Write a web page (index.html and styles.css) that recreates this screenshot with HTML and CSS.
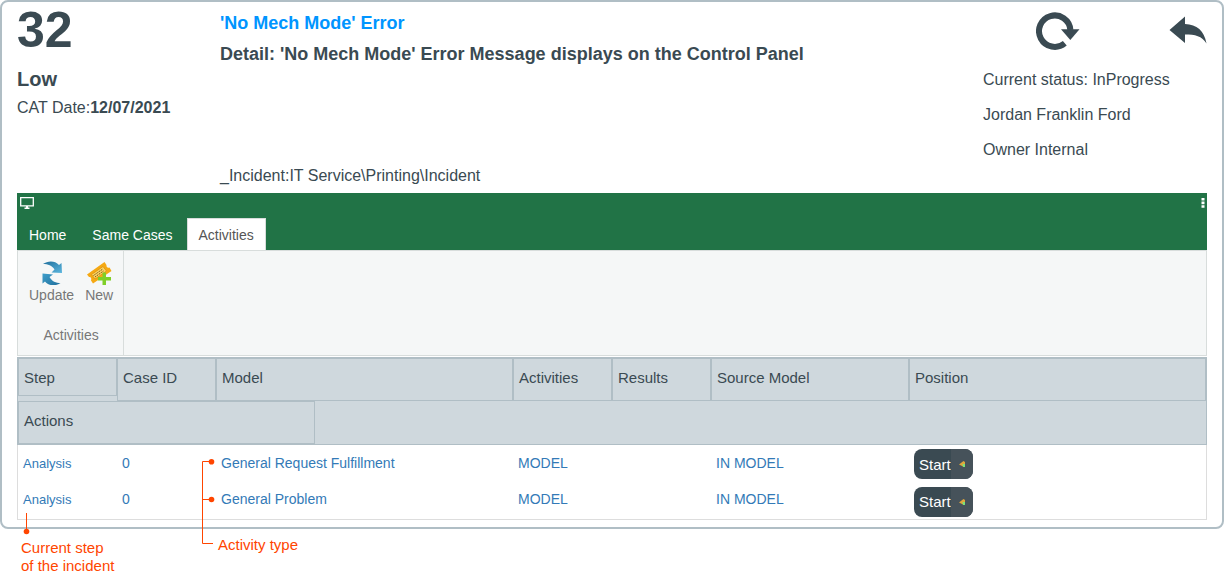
FILE: index.html
```html
<!DOCTYPE html>
<html lang="en">
<head>
  <meta charset="UTF-8" />
  <meta name="viewport" content="width=device-width, initial-scale=1.0"/>
  <title>Incident 32</title>
  <link rel="stylesheet" href="styles.css">
</head>
<body>

<main class="page">
  <div class="card">
    <header class="summary">
      <div class="summary-left">
        <div class="number">32</div>
        <div class="priority">Low</div>
        <div class="date">CAT Date:<b>12/07/2021</b></div>
      </div>

      <div class="summary-main">
        <h1>'No Mech Mode' Error</h1>
        <h2>Detail: 'No Mech Mode' Error Message displays on the Control Panel</h2>
        <p class="path">_Incident:IT Service\Printing\Incident</p>
      </div>

      <div class="summary-right">
        <div class="tools">
          <button type="button" class="icon-btn" aria-label="Refresh">
            <svg width="44" height="38" viewBox="0 0 44 38">
              <path d="M28.800 31.200A15.700 15.700 0 1 1 34.400 18" fill="none" stroke="#3a4a52" stroke-width="6"/>
              <path d="M25 17.300H43.500L34.300 28Z" fill="#3a4a52"/>
            </svg>
          </button>
          <button type="button" class="icon-btn" aria-label="Back">
            <svg width="38" height="28" viewBox="0 0 38 28">
              <path d="M.5 14L16 .5V8C28 9 35 14 37.500 27.500C33 20 26 18.500 16 18.500V27Z" fill="#3a4a52"/>
            </svg>
          </button>
        </div>
        <p>Current status: InProgress</p>
        <p>Jordan Franklin Ford</p>
        <p>Owner Internal</p>
      </div>
    </header>

    <section class="ribbon">
      <div class="ribbon-top">
        <svg width="14" height="12" viewBox="0 0 14 12">
          <path d="M.7.700H13.300V8.800H.7Z" fill="none" stroke="#fff" stroke-width="1.300"/>
          <path d="M6 9H8V10.500H9.500V12H4.500V10.500H6Z" fill="#fff"/>
        </svg>
        <svg width="4" height="11" viewBox="0 0 4 11">
          <path d="M.5 1H3.500V3.600H.5ZM.5 4.600H3.500V7.200H.5ZM.5 8.200H3.500V10.800H.5Z" fill="#fff"/>
        </svg>
      </div>
      <nav class="tabs">
        <a href="#home">Home</a>
        <a href="#same">Same Cases</a>
        <a href="#activities" class="active">Activities</a>
      </nav>
      <div class="ribbon-body">
        <div class="group">
          <div class="group-buttons">
            <button type="button" class="tool">
              <svg width="24" height="24" viewBox="0 0 24 24">
                <defs>
                  <linearGradient id="blue" x1="0" y1="0" x2="1" y2="1">
                    <stop offset="0" stop-color="#1f6f9c"/>
                    <stop offset="1" stop-color="#5cb6de"/>
                  </linearGradient>
                  <linearGradient id="blue-low" x1="0" y1="0" x2="1" y2="1">
                    <stop offset="0" stop-color="#3f9fcb"/>
                    <stop offset="1" stop-color="#1f6f9c"/>
                  </linearGradient>
                </defs>
                <path d="M3 3C8-.5 15-.5 19 4L21.500 2L22 12L11.500 11.500L14.500 8.500C12 4.500 8 3 3 3Z" fill="url(#blue)"/>
                <path d="M20.500 22C15.500 25.500 8.500 25 5 20.500L2.500 22.500V12.500L13 13.500L9.500 16C12 20.500 16 22 20.500 22Z" fill="url(#blue-low)"/>
              </svg>
              Update
            </button>
            <button type="button" class="tool">
              <svg width="26" height="24" viewBox="0 0 26 24">
                <path d="M1 13.500L18.500 1L20.500 4C20 6 22 7.500 23.500 6.500L25.500 10L7 22.500L5 19.500C6 17 4.500 15.500 3 16Z" fill="#f5a914"/>
                <path d="M5.500 13.500L17 5.500L20.500 10L9 18Z" fill="#fbd565" stroke="#dc920e" stroke-width=".8"/>
                <path d="M7.500 14.500L16.500 8.200M9 16L17.500 10" stroke="#7d5212" stroke-width="1" stroke-dasharray="1.500 .8"/>
                <path d="M16.500 11.500H20V16H25V19.500H20V24H16.500V19.500H12V16H16.500Z" fill="#7fcf28"/>
              </svg>
              New
            </button>
          </div>
          <div class="group-name">Activities</div>
        </div>
      </div>
    </section>

    <table class="grid">
      <thead>
        <tr>
          <th class="short"><span>Step</span></th>
          <th>Case ID</th>
          <th colspan="3">Model</th>
          <th>Activities</th>
          <th>Results</th>
          <th colspan="2">Source Model</th>
          <th colspan="3">Position</th>
        </tr>
        <tr>
          <th colspan="3">Actions</th>
          <td colspan="9"></td>
        </tr>
      </thead>
      <tbody>
        <tr>
          <td class="step"><a href="#a1">Analysis</a></td>
          <td><a href="#c1">0</a></td>
          <td colspan="3"><a href="#m1">General Request Fulfillment</a></td>
          <td><a href="#t1">MODEL</a></td>
          <td></td>
          <td colspan="2"><a href="#s1">IN MODEL</a></td>
          <td colspan="3" class="action">
            <button type="button" class="start"><span>Start</span>
              <svg width="22" height="30" viewBox="0 0 22 30">
                <path d="M8 15.500L12.500 12L14 13V17L12 17.500Z" fill="#e0a63a"/>
                <path d="M11.500 15H14V18H12Z" fill="#7be07a"/>
              </svg>
            </button>
          </td>
        </tr>
        <tr>
          <td class="step"><a href="#a2">Analysis</a></td>
          <td><a href="#c2">0</a></td>
          <td colspan="3"><a href="#m2">General Problem</a></td>
          <td><a href="#t2">MODEL</a></td>
          <td></td>
          <td colspan="2"><a href="#s2">IN MODEL</a></td>
          <td colspan="3" class="action">
            <button type="button" class="start"><span>Start</span>
              <svg width="22" height="30" viewBox="0 0 22 30">
                <path d="M8 15.500L12.500 12L14 13V17L12 17.500Z" fill="#e0a63a"/>
                <path d="M11.500 15H14V18H12Z" fill="#7be07a"/>
              </svg>
            </button>
          </td>
        </tr>
      </tbody>
    </table>
  </div>

  <!-- callouts drawn over the table -->
  <svg class="lines" width="220" height="92" viewBox="0 0 220 92">
    <path d="M26.500 54V73M211 2.500H202.500V84.500H213M202.500 40.500H211" fill="none" stroke="#ff4500"/>
    <circle cx="26.500" cy="72.500" r="2.800" fill="#ff4500"/>
    <circle cx="211.500" cy="2.800" r="2.800" fill="#ff4500"/>
    <circle cx="211.500" cy="40.500" r="2.800" fill="#ff4500"/>
  </svg>
  <div class="notes">
    <p class="note-step">Current step<br>of the incident</p>
    <p>Activity type</p>
  </div>
</main>

</body>
</html>
```
FILE: styles.css
```css
* {
  box-sizing: border-box;
}
body {
  font-family: "Liberation Sans", Arial, sans-serif;
  font-size: 16px;
  color: #3a4a52;
  background: #fff;
  margin: 0;
}
h1, h2, p {
  margin: 0;
}
button {
  font-family: inherit;
  border: none;
  padding: 0;
  cursor: pointer;
}
a {
  text-decoration: none;
}
svg {
  display: block;
}
.page {
  position: relative;
}
.card {
  border: 2px solid #b0bec5;
  border-radius: 8px;
  padding: 0 15px 7px;
}

/* header */
.summary {
  display: grid;
  grid-template-columns: 203px 1fr 224px;
  height: 191px;
}
.number {
  font-size: 50px;
  font-weight: bold;
  line-height: 57px;
}
.priority {
  font-size: 20px;
  font-weight: bold;
  line-height: 24px;
  margin-top: 8px;
}
.date {
  line-height: 20px;
  margin-top: 7px;
}
.summary-main {
  display: flex;
  flex-direction: column;
  padding: 6px 0 7px;
}
h1, h2 {
  font-size: 18px;
  line-height: 31px;
}
h1 {
  color: #0095ff;
}
.path {
  line-height: 20px;
  margin-top: auto;
}
.summary-right p {
  line-height: 35px;
}
.tools {
  display: flex;
  justify-content: space-between;
  align-items: flex-start;
  height: 60px;
  padding: 10px 0 0 53px;
}
.icon-btn {
  background: none;
}
.icon-btn + .icon-btn {
  padding-top: 4px;
}

/* ribbon */
.ribbon {
  margin-bottom: 1px;
  font-size: 14px;
}
.ribbon-top {
  display: flex;
  justify-content: space-between;
  height: 25px;
  padding: 4px 2px 0 3px;
  background: #217346;
}
.tabs {
  display: flex;
  gap: 2px;
  background: #217346;
}
.tabs a {
  height: 32px;
  color: #fff;
  font-size: 14px;
  line-height: 34px;
  padding: 0 12px;
}
.tabs a.active {
  color: #555;
  background: #fff;
  border: 1px solid #d8dddc;
  border-bottom: none;
  padding: 0 11px;
  line-height: 32px;
}
.ribbon-body {
  display: flex;
  height: 106px;
  background: #f5f7f7;
  border: 1px solid #d8dddc;
}
.group {
  display: flex;
  flex-direction: column;
  justify-content: space-between;
  padding: 10px 10px 10px 11px;
  border-right: 1px solid #d8dddc;
  color: #777;
}
.group-buttons {
  display: flex;
  gap: 11px;
}
.tool {
  display: flex;
  flex-direction: column;
  align-items: center;
  background: none;
  color: #777;
  font-size: 14px;
  line-height: 20px;
}
.group-name {
  text-align: center;
  line-height: 20px;
}

/* table */
.grid {
  width: 100%;
  table-layout: fixed;
  border: 1px solid #ddd;
  border-spacing: 0;
}
.grid thead {
  background: #cfd8dd;
  font-size: 15px;
  outline: 1px solid #b0bec5;
}
.grid th {
  height: 43px;
  padding: 0 5px 4px;
  border: 1px solid #b0bec5;
  font-weight: normal;
  text-align: left;
}
.grid th.short {
  padding: 0;
  border: none;
  vertical-align: top;
}
.short span {
  display: block;
  height: 38px;
  padding-left: 5px;
  line-height: 38px;
  border: 1px solid #b0bec5;
}
.grid tbody td {
  height: 37px;
  padding: 0 5px;
  font-size: 14px;
}
.grid tbody td.step {
  font-size: 13px;
  padding-top: 1px;
}
.grid tbody td.action {
  padding: 5px 5px 2px;
}
.grid tbody tr:last-child td {
  height: 38px;
  padding-bottom: 2px;
}
.grid tbody a {
  color: #337ab7;
}
.start {
  display: flex;
  align-items: center;
  height: 30px;
  border-radius: 8px;
  overflow: hidden;
  background: #3a4a52;
  color: #fff;
  font-size: 15px;
}
.start span {
  width: 37px;
  padding-left: 5px;
  text-align: left;
}
.start svg {
  background: #46525a;
}

/* callouts */
.lines {
  position: absolute;
  left: 0;
  top: 459px;
}
.notes {
  display: flex;
  padding-top: 10px;
  color: #ff4500;
  font-size: 15px;
  line-height: 18px;
}
.note-step {
  width: 197px;
}
.notes p {
  margin-left: 21px;
}
.notes p + p {
  margin: -3px 0 0;
}
```
